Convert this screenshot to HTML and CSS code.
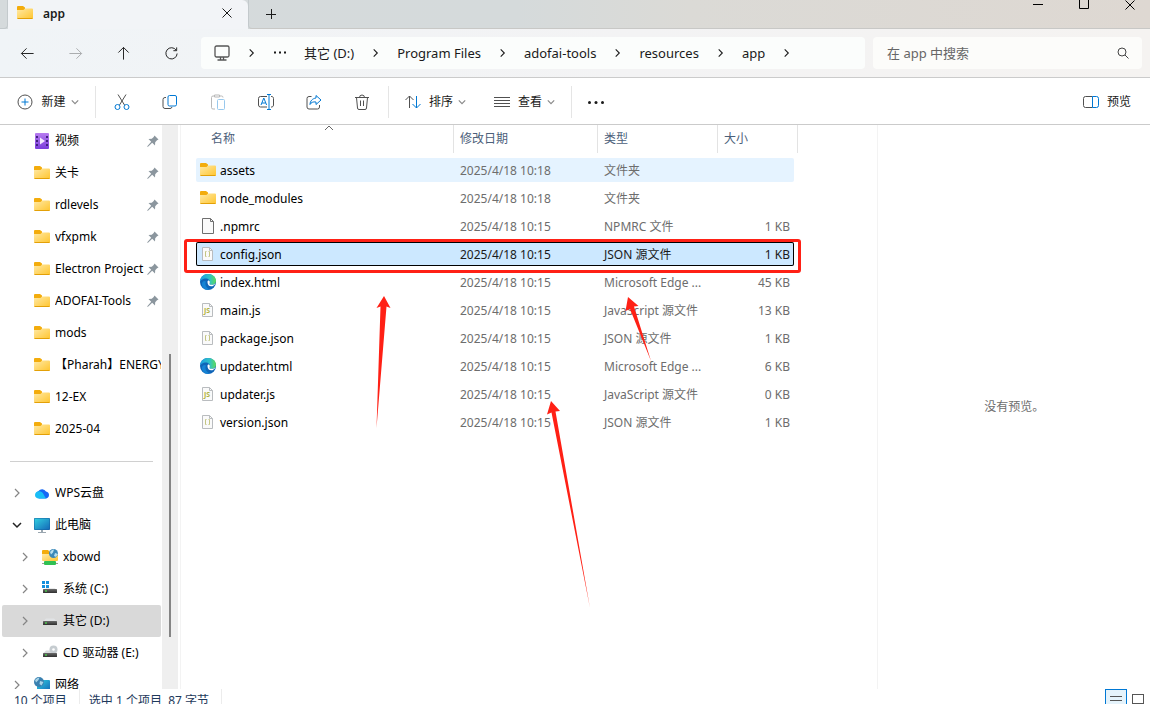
FILE: index.html
```html
<!DOCTYPE html>
<html lang="zh-CN">
<head>
  <meta charset="UTF-8" />
  <meta name="viewport" content="width=device-width, initial-scale=1.0"/>
  <title>app</title>
  <link rel="stylesheet" href="styles.css">
</head>
<body>
  <svg class="sprite" aria-hidden="true">
    <defs>
      <linearGradient id="g-folder" x1="0" y1="0" x2="1" y2="1">
        <stop offset="0" stop-color="#ffe9a6"/><stop offset="1" stop-color="#ffc52e"/>
      </linearGradient>
      <linearGradient id="g-video" x1="0" y1="0" x2="0" y2="1">
        <stop offset="0" stop-color="#b77cf0"/><stop offset="1" stop-color="#7a3ddb"/>
      </linearGradient>
      <linearGradient id="g-screen" x1="0" y1="0" x2="1" y2="1">
        <stop offset="0" stop-color="#32d0e0"/><stop offset="1" stop-color="#1469b8"/>
      </linearGradient>
      <linearGradient id="g-edge" x1="0" y1="0" x2="1" y2="0">
        <stop offset="0" stop-color="#1b9de2"/><stop offset="0.6" stop-color="#2fc2c6"/><stop offset="1" stop-color="#5fdc58"/>
      </linearGradient>
      <linearGradient id="g-drive" x1="0" y1="0" x2="0" y2="1">
        <stop offset="0" stop-color="#6a6a6a"/><stop offset="1" stop-color="#2f2f2f"/>
      </linearGradient>
    </defs>
    <symbol id="folder" viewBox="0 0 16 16">
      <path d="M0 2a1 1 0 0 1 1-1h5l2 1.500v3H0z" fill="#f3ac0c"/>
      <path d="M0 5h6.500l1.500-1.500h7a1 1 0 0 1 1 1V13a1 1 0 0 1-1 1H1a1 1 0 0 1-1-1z" fill="url(#g-folder)"/>
      <path d="M0.500 13.500h15" stroke="#e3a008"/>
    </symbol>
    <symbol id="pin" viewBox="0 0 12 12">
      <path d="M7.500 0.500l4 4-1.500 0.800-1.800 1.900-0.200 3.300-2.800-2.700L1 11.800l-0.700 0.100 0.200-0.900 3.700-4.300L1.500 4l3.300-0.300L6.700 2z" fill="#8b969e"/>
    </symbol>
    <symbol id="chevron" viewBox="0 0 10 10">
      <path d="M3 1l4 4-4 4" fill="none" stroke="currentColor" stroke-width="1.200"/>
    </symbol>
    <symbol id="chevron-down" viewBox="0 0 10 10">
      <path d="M1 3l4 4 4-4" fill="none" stroke="currentColor" stroke-width="1.500"/>
    </symbol>
    <symbol id="close" viewBox="0 0 10 10">
      <path d="M0.500 0.500l9 9M9.500 0.500l-9 9" fill="none" stroke="currentColor"/>
    </symbol>
    <symbol id="json" viewBox="0 0 16 16">
      <path d="M2.500 1.500h7l3 3v10h-10z" fill="#fafafa" stroke="#b9bcbf"/>
      <path d="M9.500 1.500v3h3" fill="none" stroke="#b9bcbf"/>
      <path d="M6.500 5.500h-1v5h1M8.500 5.500h1v5h-1" fill="none" stroke="#c3c582"/>
    </symbol>
    <symbol id="js" viewBox="0 0 16 16">
      <path d="M2.500 1.500h7l3 3v10h-10z" fill="#fafafa" stroke="#b9bcbf"/>
      <path d="M9.500 1.500v3h3" fill="none" stroke="#b9bcbf"/>
      <text x="4" y="11" class="js-mark">JS</text>
    </symbol>
    <symbol id="page" viewBox="0 0 16 16">
      <path d="M2.500 0.500h8l3 3v12h-11z" fill="#fafafa" stroke="#6f6f6f"/>
      <path d="M10.500 0.500v3h3" fill="none" stroke="#6f6f6f"/>
    </symbol>
    <symbol id="edge" viewBox="0 0 16 16">
      <circle cx="8" cy="8" r="8" fill="#0f65b8"/>
      <path d="M0 8C0 3.500 3.500 0 8 0c4.800 0 8 3.300 8 6.800 0 2.500-2 4-4.200 4-1.900 0-2.600-.8-2.200-1.600C10.500 7 9 4.600 6 4.600 2.800 4.600 0 6.500 0 8z" fill="url(#g-edge)"/>
      <path d="M7.500 8.200C7.300 7 8.200 6.400 8.800 6.600 10 7.200 10 8.300 9.600 9.200c-.4 1 .3 1.600 2.200 1.600 1.500 0 2.700-.5 3.500-1.400-.8 1.800-2.300 2.900-4.100 2.900C9 12.300 7.500 10.500 7.500 8.200z" fill="#fff"/>
      <path d="M6 7.500c-1.500 3 0 6.500 4 8.200C5 16.500 1.500 13 2 9.500 2.300 7.500 4 6 6 7.500z" fill="#1583d4"/>
    </symbol>
    <symbol id="video" viewBox="0 0 16 16">
      <rect x="1" y="0" width="14" height="16" rx="1" fill="url(#g-video)"/>
      <path d="M2 3h2v2H2zM2 7h2v2H2zM2 11h2v2H2zM12 3h2v2h-2zM12 7h2v2h-2zM12 11h2v2h-2z" fill="#402080"/>
      <path d="M6 4.500l5 3.500-5 3.500z" fill="#f4eaff"/>
    </symbol>
    <symbol id="cloud" viewBox="0 0 16 16">
      <path d="M5 13.500a4 4 0 0 1-.5-7.500A4.500 4.500 0 0 1 12 6.500c2 .3 3 1.800 3 3.500 0 2-1.500 3.500-3.500 3.500z" fill="#1668f5"/>
      <path d="M5 13.500C2.500 13.500 1 12 1 10c0-2.300 1.800-3.700 4-3.700 2.500 0 4 1.500 5 3.700.7 1.700 2 3.500 3 3.500z" fill="#19bdf6"/>
    </symbol>
    <symbol id="pc" viewBox="0 0 16 16">
      <rect x="0" y="1" width="16" height="12" rx="1" fill="#1260a0"/>
      <rect x="0.500" y="1.500" width="15" height="11" rx="0.500" fill="url(#g-screen)"/>
      <path d="M7 13h2v2h3v1H4v-1h3z" fill="#9ba7b0"/>
    </symbol>
    <symbol id="netdrive" viewBox="0 0 16 16">
      <path d="M0 2a1 1 0 0 1 1-1h5l2 2v3H0z" fill="#f3ac0c"/>
      <path d="M0 5h16v6a1 1 0 0 1-1 1H1a1 1 0 0 1-1-1z" fill="url(#g-folder)"/>
      <circle cx="11.500" cy="4.500" r="4.500" fill="#3a88b8"/>
      <path d="M8 3q2-3 4-2.500l-1 3-2 2zM13 4l3 1-2 3-2-1z" fill="#b6dff0"/>
      <path d="M0 14.500h16" stroke="#9a9a9a"/>
      <rect x="2" y="12" width="12" height="4" rx="1" fill="#31c052"/>
    </symbol>
    <symbol id="drive-c" viewBox="0 0 16 16">
      <path d="M0 0h3v3H0zM4 0h3v3H4zM0 4h3v3H0zM4 4h3v3H4z" fill="#1590dd"/>
      <path d="M4 7.500h9l2 2H2z" fill="#d4d6d8"/>
      <rect x="1" y="8" width="14" height="4" rx="0.500" fill="url(#g-drive)"/>
      <rect x="3" y="9.500" width="2" height="1" fill="#4dff4d"/>
    </symbol>
    <symbol id="drive" viewBox="0 0 16 16">
      <path d="M4 5.500h8l3 3H1z" fill="#e1e3e5"/>
      <rect x="1" y="8" width="14" height="4" rx="0.500" fill="url(#g-drive)"/>
      <rect x="3" y="9.500" width="2" height="1" fill="#4dff4d"/>
    </symbol>
    <symbol id="drive-cd" viewBox="0 0 16 16">
      <path d="M4 5.500h8l3 3H1z" fill="#d9dbdd"/>
      <circle cx="11.500" cy="4.500" r="4" fill="#c6ccd0"/>
      <circle cx="11.500" cy="4.500" r="1.300" fill="#fff"/>
      <rect x="1" y="8" width="14" height="4" rx="0.500" fill="url(#g-drive)"/>
      <rect x="3" y="9.500" width="2" height="1" fill="#4dff4d"/>
    </symbol>
    <symbol id="network" viewBox="0 0 16 16">
      <rect x="3" y="3" width="13" height="11" rx="1" fill="url(#g-screen)"/>
      <circle cx="5" cy="5" r="5" fill="#3a80b0"/>
      <path d="M1 3q2-2.500 4.500-2.500L4.500 3 2 5.500zM6 4l3.500 1-2 3.500-2-1.500z" fill="#a9d4e8"/>
      <path d="M7 14h5v1H7z" fill="#9ba7b0"/>
    </symbol>
  </svg>

  <header class="title-bar">
    <div class="tab-edge"></div>
    <div class="tab">
      <svg class="icon"><use href="#folder"/></svg>
      <span class="tab-title">app</span>
      <button class="tab-close" aria-label="关闭标签页"><svg class="icon-small"><use href="#close"/></svg></button>
    </div>
    <div class="tab-rest">
      <button class="tab-new" aria-label="新标签页">
        <svg class="icon-small" viewBox="0 0 10 10"><path d="M0 5.500h10M5.500 0v10" stroke="currentColor"/></svg>
      </button>
      <div class="window-controls">
        <button aria-label="最小化"><svg class="icon-small" viewBox="0 0 10 10"><path d="M0 4.500h10" stroke="currentColor"/></svg></button>
        <button aria-label="最大化"><svg class="icon-small" viewBox="0 0 10 10"><path d="M0.500 0v8.500h9V0" fill="none" stroke="currentColor"/></svg></button>
        <button aria-label="关闭"><svg class="icon-small"><use href="#close"/></svg></button>
      </div>
    </div>
  </header>

  <nav class="nav-bar">
    <div class="nav-buttons">
      <button aria-label="后退"><svg class="icon line" viewBox="0 0 16 16"><path d="M14.500 8h-13M7 2.500L1.500 8 7 13.500"/></svg></button>
      <button aria-label="前进" disabled><svg class="icon line" viewBox="0 0 16 16"><path d="M1.500 8h13M9 2.500L14.500 8 9 13.500"/></svg></button>
      <button aria-label="上移"><svg class="icon line" viewBox="0 0 16 16"><path d="M8 14.500v-13M2.500 7L8 1.500 13.500 7"/></svg></button>
      <button aria-label="刷新"><svg class="icon line" viewBox="0 0 16 16"><path d="M13 4.500A6 6 0 1 0 14 8M13.500 1.500v3.500H10"/></svg></button>
    </div>
    <div class="address">
      <svg class="icon monitor" viewBox="0 0 16 16">
        <rect x="1" y="1" width="14" height="11" rx="1.500"/><path d="M6.500 12v3M9.500 12v3M3.500 15h9"/>
      </svg>
      <svg class="icon-small"><use href="#chevron"/></svg>
      <button class="more-path" aria-label="更多路径"><svg viewBox="0 0 14 16"><path d="M1 6.500h2v2H1zM6 6.500h2v2H6zM11 6.500h2v2h-2z" fill="currentColor"/></svg></button>
      <a href="#">其它 (D:)</a>
      <svg class="icon-small"><use href="#chevron"/></svg>
      <a href="#">Program Files</a>
      <svg class="icon-small"><use href="#chevron"/></svg>
      <a href="#">adofai-tools</a>
      <svg class="icon-small"><use href="#chevron"/></svg>
      <a href="#">resources</a>
      <svg class="icon-small"><use href="#chevron"/></svg>
      <a href="#">app</a>
      <svg class="icon-small"><use href="#chevron"/></svg>
    </div>
    <div class="search">
      <input type="text" placeholder="在 app 中搜索" aria-label="搜索">
      <svg class="icon-search" viewBox="0 0 12 12"><circle cx="5" cy="5" r="4"/><path d="M8 8l3.500 3.500"/></svg>
    </div>
  </nav>

  <div class="toolbar">
    <button class="tool tool-new">
      <svg class="icon line" viewBox="0 0 16 16"><circle cx="8" cy="8" r="7"/><path class="blue" d="M8 4.500v7M4.500 8h7"/></svg>
      新建
      <svg class="icon-caret"><use href="#chevron-down"/></svg>
    </button>
    <div class="tool-group">
      <button aria-label="剪切"><svg class="icon line" viewBox="0 0 16 16"><path d="M4 0.500l6.500 10.500M12 0.500L5.500 11"/><g class="blue"><circle cx="3.500" cy="13" r="2.500"/><circle cx="12.500" cy="13" r="2.500"/></g></svg></button>
      <button aria-label="复制"><svg class="icon line" viewBox="0 0 16 16"><path d="M4 3.500H3A2 2 0 0 0 1 5.500v7a2 2 0 0 0 2 2h5a2 2 0 0 0 2-1.500"/><rect class="blue" x="6" y="1.500" width="8.500" height="10.500" rx="1.500"/></svg></button>
      <button aria-label="粘贴" disabled><svg class="icon line" viewBox="0 0 16 16"><path d="M5 15H3a1.500 1.500 0 0 1-1.500-1.500v-10A1.500 1.500 0 0 1 3 2h1.500M10 2h1.500A1.500 1.500 0 0 1 13 3.500M4.500 1h5v2h-5z"/><rect class="blue" x="7.500" y="5.500" width="7" height="10" rx="1"/></svg></button>
      <button aria-label="重命名"><svg class="icon line" viewBox="0 0 16 16"><path d="M9 2.500H2.500A2 2 0 0 0 .5 4.500v6.500a2 2 0 0 0 2 2H9M13 2.500a2 2 0 0 1 2.500 2v6.500a2 2 0 0 1-2.500 2"/><path class="blue" d="M3 11l2.800-7 2.800 7M4 9h3.600M11 .5v15M9 .5h4M9 15.500h4"/></svg></button>
      <button aria-label="共享"><svg class="icon line" viewBox="0 0 16 16"><path d="M5.500 2.500H3A2 2 0 0 0 1 4.500v8.500a2 2 0 0 0 2 2h8.500a2 2 0 0 0 2-2v-2"/><path class="blue" d="M10 1.500l5 4.500-5 4.500V8C7 7.500 5 8.500 4 10.500 4 7 6.500 4.500 10 4z"/></svg></button>
      <button aria-label="删除"><svg class="icon line" viewBox="0 0 16 16"><path d="M1 3.500h14M5.500 3.500a2.500 2.500 0 0 1 5 0M2.500 3.500l1 10.500a1.500 1.500 0 0 0 1.500 1.500h6a1.500 1.500 0 0 0 1.500-1.500l1-10.500M6.500 6.500v5.500M9.500 6.500v5.500"/></svg></button>
    </div>
    <div class="tool-views">
      <button class="tool">
        <svg class="icon line" viewBox="0 0 16 16"><path d="M4.500 14V2M0.500 6l4-4 4 4"/><path class="blue" d="M11.500 2v12M7.500 10l4 4 4-4"/></svg>
        排序
        <svg class="icon-caret"><use href="#chevron-down"/></svg>
      </button>
      <button class="tool">
        <svg class="icon line" viewBox="0 0 16 16"><path d="M0 3.500h16M0 6.500h16M0 9.500h16M0 12.500h16"/></svg>
        查看
        <svg class="icon-caret"><use href="#chevron-down"/></svg>
      </button>
    </div>
    <button class="tool tool-more" aria-label="更多">
      <svg class="icon" viewBox="0 0 16 16"><g fill="currentColor"><circle cx="1.500" cy="8.500" r="1.500"/><circle cx="8" cy="8.500" r="1.500"/><circle cx="14.500" cy="8.500" r="1.500"/></g></svg>
    </button>
    <button class="tool tool-preview">
      <svg class="icon line" viewBox="0 0 16 16"><path d="M9.500 2.500H2.500a2 2 0 0 0-2 2v7a2 2 0 0 0 2 2h7"/><path class="blue" d="M9.500 2.500h4a2 2 0 0 1 2 2v7a2 2 0 0 1-2 2h-4z"/></svg>
      预览
    </button>
  </div>

  <main class="content">
    <aside class="sidebar">
      <ul class="tree quick">
        <li><svg class="icon"><use href="#video"/></svg><span>视频</span><svg class="icon-pin"><use href="#pin"/></svg></li>
        <li><svg class="icon"><use href="#folder"/></svg><span>关卡</span><svg class="icon-pin"><use href="#pin"/></svg></li>
        <li><svg class="icon"><use href="#folder"/></svg><span>rdlevels</span><svg class="icon-pin"><use href="#pin"/></svg></li>
        <li><svg class="icon"><use href="#folder"/></svg><span>vfxpmk</span><svg class="icon-pin"><use href="#pin"/></svg></li>
        <li><svg class="icon"><use href="#folder"/></svg><span>Electron Project</span><svg class="icon-pin"><use href="#pin"/></svg></li>
        <li><svg class="icon"><use href="#folder"/></svg><span>ADOFAI-Tools</span><svg class="icon-pin"><use href="#pin"/></svg></li>
        <li><svg class="icon"><use href="#folder"/></svg><span>mods</span></li>
        <li><svg class="icon"><use href="#folder"/></svg><span>【Pharah】ENERGY</span></li>
        <li><svg class="icon"><use href="#folder"/></svg><span>12-EX</span></li>
        <li><svg class="icon"><use href="#folder"/></svg><span>2025-04</span></li>
      </ul>
      <hr>
      <ul class="tree">
        <li><svg class="icon-arrow"><use href="#chevron"/></svg><svg class="icon"><use href="#cloud"/></svg><span>WPS云盘</span></li>
        <li><svg class="icon-arrow open"><use href="#chevron-down"/></svg><svg class="icon"><use href="#pc"/></svg><span>此电脑</span></li>
        <li class="child"><svg class="icon-arrow"><use href="#chevron"/></svg><svg class="icon"><use href="#netdrive"/></svg><span>xbowd</span></li>
        <li class="child"><svg class="icon-arrow"><use href="#chevron"/></svg><svg class="icon"><use href="#drive-c"/></svg><span>系统 (C:)</span></li>
        <li class="child current"><svg class="icon-arrow"><use href="#chevron"/></svg><svg class="icon"><use href="#drive"/></svg><span>其它 (D:)</span></li>
        <li class="child"><svg class="icon-arrow"><use href="#chevron"/></svg><svg class="icon"><use href="#drive-cd"/></svg><span>CD 驱动器 (E:)</span></li>
        <li><svg class="icon-arrow"><use href="#chevron"/></svg><svg class="icon"><use href="#network"/></svg><span>网络</span></li>
      </ul>
    </aside>
    <div class="scrollbar"><div class="thumb"></div></div>

    <section class="files">
      <table>
        <thead>
          <tr>
            <th><svg class="sort-mark" viewBox="0 0 10 6"><path d="M1 5l4-4 4 4"/></svg>名称</th>
            <th>修改日期</th>
            <th>类型</th>
            <th>大小</th>
          </tr>
        </thead>
        <tbody>
          <tr class="hover"><td><svg class="icon"><use href="#folder"/></svg>assets</td><td>2025/4/18 10:18</td><td>文件夹</td><td></td></tr>
          <tr><td><svg class="icon"><use href="#folder"/></svg>node_modules</td><td>2025/4/18 10:18</td><td>文件夹</td><td></td></tr>
          <tr><td><svg class="icon"><use href="#page"/></svg>.npmrc</td><td>2025/4/18 10:15</td><td>NPMRC 文件</td><td>1 KB</td></tr>
          <tr class="selected"><td><svg class="icon"><use href="#json"/></svg>config.json</td><td>2025/4/18 10:15</td><td>JSON 源文件</td><td>1 KB</td></tr>
          <tr><td><svg class="icon"><use href="#edge"/></svg>index.html</td><td>2025/4/18 10:15</td><td>Microsoft Edge ...</td><td>45 KB</td></tr>
          <tr><td><svg class="icon"><use href="#js"/></svg>main.js</td><td>2025/4/18 10:15</td><td>JavaScript 源文件</td><td>13 KB</td></tr>
          <tr><td><svg class="icon"><use href="#json"/></svg>package.json</td><td>2025/4/18 10:15</td><td>JSON 源文件</td><td>1 KB</td></tr>
          <tr><td><svg class="icon"><use href="#edge"/></svg>updater.html</td><td>2025/4/18 10:15</td><td>Microsoft Edge ...</td><td>6 KB</td></tr>
          <tr><td><svg class="icon"><use href="#js"/></svg>updater.js</td><td>2025/4/18 10:15</td><td>JavaScript 源文件</td><td>0 KB</td></tr>
          <tr><td><svg class="icon"><use href="#json"/></svg>version.json</td><td>2025/4/18 10:15</td><td>JSON 源文件</td><td>1 KB</td></tr>
        </tbody>
      </table>
      <!-- red arrows drawn over the list -->
      <svg class="arrows" viewBox="0 0 696 564">
        <path d="M203 171l6.500 12-4-1.500L195.500 303l4-121.500-4 1.500z"/>
        <path d="M447 172l10.500 9-4.500 0.500L470 236l-21-52-4.500 2z"/>
        <path d="M370 276l9 10-4.500 0.500L409 483l-38.500-195.500-4.500 2z"/>
      </svg>
    </section>

    <section class="preview">没有预览。</section>
  </main>

  <footer class="status-bar">
    <span class="count">10 个项目</span>
    <span class="count">选中 1 个项目&nbsp; 87 字节</span>
    <div class="view-modes">
      <button class="active" aria-label="详细信息"><svg class="icon line" viewBox="0 0 16 16"><path d="M2 5.500h12M2 9.500h12M2 13.500h12"/></svg></button>
      <button aria-label="大图标"><svg class="icon line" viewBox="0 0 16 16"><rect x="2.500" y="3.500" width="11" height="9"/></svg></button>
    </div>
  </footer>
</body>
</html>
```
FILE: styles.css
```css
* {
  box-sizing: border-box;
}

body {
  margin: 0;
  height: 100vh;
  display: flex;
  flex-direction: column;
  overflow: hidden;
  background: #fff;
  color: #1a1a1a;
  font-family: "Noto Sans", "Noto Sans CJK SC", sans-serif;
  font-size: 12px;
  line-height: 16px;
}

button {
  display: flex;
  align-items: center;
  justify-content: center;
  padding: 0;
  border: none;
  background: none;
  color: inherit;
  font: inherit;
  white-space: nowrap;
}

a {
  color: inherit;
  text-decoration: none;
}

svg {
  flex: none;
  display: block;
}

.sprite {
  position: absolute;
  width: 0;
  height: 0;
}

.icon {
  width: 16px;
  height: 16px;
}

.icon-small {
  width: 10px;
  height: 10px;
}

.icon-caret {
  width: 8px;
  height: 8px;
  color: #8a8a8a;
}

.line {
  fill: none;
  stroke: currentColor;
}

.blue {
  stroke: #0078d4;
}

.js-mark {
  font: bold 7px "Noto Sans", sans-serif;
  fill: #b0b23c;
}

/* title bar */
.title-bar {
  flex: none;
  display: flex;
  height: 29px;
  background: linear-gradient(to right, #d5dadc, #d5dadb 45%, #dbdad6 60%, #ded8d2);
}

.tab-edge {
  width: 8px;
  border-right: 1px solid #c3c9cc;
  border-bottom: 1px solid #c3c9cc;
  border-radius: 0 0 4px 0;
}

.tab {
  display: flex;
  align-items: center;
  width: 240px;
  padding: 0 16px 3px 9px;
  background: #f2f4f7;
  border-radius: 0 6px 0 0;
}

.tab-title {
  flex: 1;
  margin-left: 10px;
  padding-top: 2px;
  font-weight: 600;
}

.tab-rest {
  flex: 1;
  display: flex;
  justify-content: space-between;
  border-left: 1px solid #c3c9cc;
  border-bottom: 1px solid #c8c8c6;
  border-radius: 0 0 0 4px;
}

.tab-new {
  width: 44px;
}

.window-controls {
  display: flex;
  align-items: flex-start;
  margin-right: -3px;
}

.window-controls button {
  width: 46px;
  height: 10px;
  color: #000;
}

/* navigation */
.nav-bar {
  flex: none;
  display: flex;
  align-items: center;
  gap: 8px;
  height: 49px;
  padding-right: 8px;
  background: linear-gradient(to right, #f0f4f7, #f3f3f4 55%, #f5f3f1);
  border-bottom: 1px solid #cbcbcb;
  font-size: 13px;
}

.nav-buttons {
  flex: none;
  display: flex;
  width: 193px;
  padding-left: 3px;
}

.nav-buttons button {
  flex: none;
  width: 48px;
  height: 32px;
}

.nav-buttons button:disabled {
  color: #a5a8aa;
}

.nav-buttons .icon {
  width: 15px;
  height: 15px;
}

.address {
  flex: 651;
  display: flex;
  align-items: center;
  gap: 17px;
  height: 32px;
  padding-left: 13px;
  background: #fbfdfc;
  border-radius: 4px;
  white-space: nowrap;
}

.address .icon-small {
  width: 9px;
}

.more-path svg {
  width: 14px;
  height: 16px;
}

.monitor {
  fill: none;
  stroke: #555;
  stroke-width: 1.3;
}

.search {
  flex: 242;
  display: flex;
  align-items: center;
  height: 32px;
  padding: 0 13px 0 14px;
  background: #fcfcfa;
  border-radius: 4px;
}

.search input {
  flex: 1;
  min-width: 0;
  padding: 0;
  border: none;
  outline: none;
  background: none;
  font: inherit;
}

.search input::placeholder {
  color: #666;
  opacity: 1;
}

.icon-search {
  width: 12px;
  height: 12px;
  fill: none;
  stroke: #444;
}

/* toolbar */
.toolbar {
  flex: none;
  display: flex;
  align-items: center;
  height: 47px;
  padding: 2px 19px 0 17px;
  border-bottom: 1px solid #cbcbcb;
}

.tool {
  gap: 8px;
}

.tool .icon-caret {
  margin-left: -3px;
}

.toolbar .line {
  color: #505050;
}

.tool-new {
  width: 79px;
  height: 32px;
  padding-right: 16px;
  border-right: 1px solid #e5e5e5;
}

.tool-group {
  display: flex;
  height: 32px;
  padding: 0 2px;
  border-right: 1px solid #e5e5e5;
}

.tool-group button {
  width: 48px;
}

.tool-group button:disabled {
  opacity: 0.4;
}

.tool-views {
  display: flex;
  gap: 28px;
  height: 32px;
  padding: 0 16px;
  border-right: 1px solid #e5e5e5;
}

.tool-more {
  margin-left: 16px;
}

.tool-preview {
  margin-left: auto;
}

/* main area */
.content {
  flex: 1;
  display: flex;
  min-height: 0;
  overflow: hidden;
}

.sidebar {
  width: 162px;
  overflow: hidden;
  color: #000;
}

.tree {
  margin: 0;
  padding: 0 1px 0 2px;
  list-style: none;
}

.tree li {
  display: flex;
  align-items: center;
  height: 32px;
  padding-left: 10px;
  border-radius: 2px;
}

.tree.quick li {
  padding-left: 32px;
}

.tree li.child {
  padding-left: 18px;
}

.tree li.current {
  background: #d9d9d9;
}

.tree span {
  flex: 1;
  min-width: 0;
  margin-left: 5px;
  overflow: hidden;
  white-space: nowrap;
}

.icon-pin {
  width: 12px;
  height: 12px;
  margin-right: 2px;
}

.icon-arrow {
  width: 10px;
  height: 10px;
  margin-right: 12px;
  color: #858585;
}

.icon-arrow.open {
  color: #222;
}

.sidebar hr {
  margin: 16px 9px 15px 10px;
  border: none;
  border-top: 1px solid #d0d0d0;
}

.scrollbar {
  display: grid;
  grid-template-rows: 229fr 283fr 52fr;
  justify-content: center;
  width: 16px;
  background: #efefef;
}

.thumb {
  grid-row: 2;
  width: 2px;
  background: #858585;
}

.files {
  position: relative;
  flex: 697;
  margin-left: 2px;
  border-left: 1px solid #f3f3f3;
}

.files table,
.files thead,
.files tbody {
  display: block;
}

.files tr {
  display: grid;
  align-items: center;
}

.files thead tr {
  grid-template-columns: 249px 144px 120px 80px;
  height: 28px;
  margin-left: 24px;
}

.files th {
  position: relative;
  height: 28px;
  padding-left: 6px;
  border-right: 1px solid #e3e3e3;
  color: #4c607a;
  font-weight: normal;
  line-height: 26px;
  text-align: left;
}

.sort-mark {
  position: absolute;
  top: 0;
  left: 50%;
  width: 10px;
  height: 6px;
  margin-left: -5px;
  fill: none;
  stroke: #666;
}

.files tbody {
  padding-top: 5px;
}

.files tbody tr {
  position: relative;
  grid-template-columns: 258px 144px 120px 76px;
  width: 598px;
  height: 24px;
  margin: 0 0 4px 15px;
  border-radius: 2px;
  color: #6d6d6d;
}

.files td {
  padding: 2px 4px 0 6px;
  white-space: nowrap;
}

.files td:first-child {
  display: flex;
  align-items: center;
  gap: 4px;
  padding-left: 4px;
  color: #000;
}

.files td .icon {
  margin: -2px 0 0;
}

.files td:last-child {
  text-align: right;
}

.files tr.hover {
  background: #e5f3ff;
}

.files tbody tr.selected {
  background: #cce8ff;
  box-shadow: inset 0 0 0 1px #000;
  color: #1a1a1a;
}

.selected::after {
  content: "";
  position: absolute;
  inset: -3px -7px -7px -12px;
  border: 3px solid #ff2015;
  border-radius: 3px;
}

.arrows {
  position: absolute;
  top: 0;
  left: 0;
  width: 696px;
  height: 564px;
  fill: #ff2015;
  pointer-events: none;
}

.preview {
  flex: 272;
  display: flex;
  align-items: center;
  justify-content: center;
  border-left: 1px solid #f3f3f3;
  color: #6d6d6d;
}

/* status bar, its lower part runs past the window edge */
.status-bar {
  flex: none;
  display: flex;
  height: 15px;
  padding: 0 1px 0 14px;
  color: #1e395b;
  line-height: 24px;
}

.count {
  height: 24px;
  margin-right: 9px;
  padding-right: 12px;
  border-right: 1px solid #ececec;
  white-space: nowrap;
}

.view-modes {
  display: flex;
  margin-left: auto;
}

.view-modes button {
  width: 22px;
  height: 20px;
  color: #555;
}

.view-modes button.active {
  border: 1px solid #0078d4;
  background: #e5f3fb;
}
```
